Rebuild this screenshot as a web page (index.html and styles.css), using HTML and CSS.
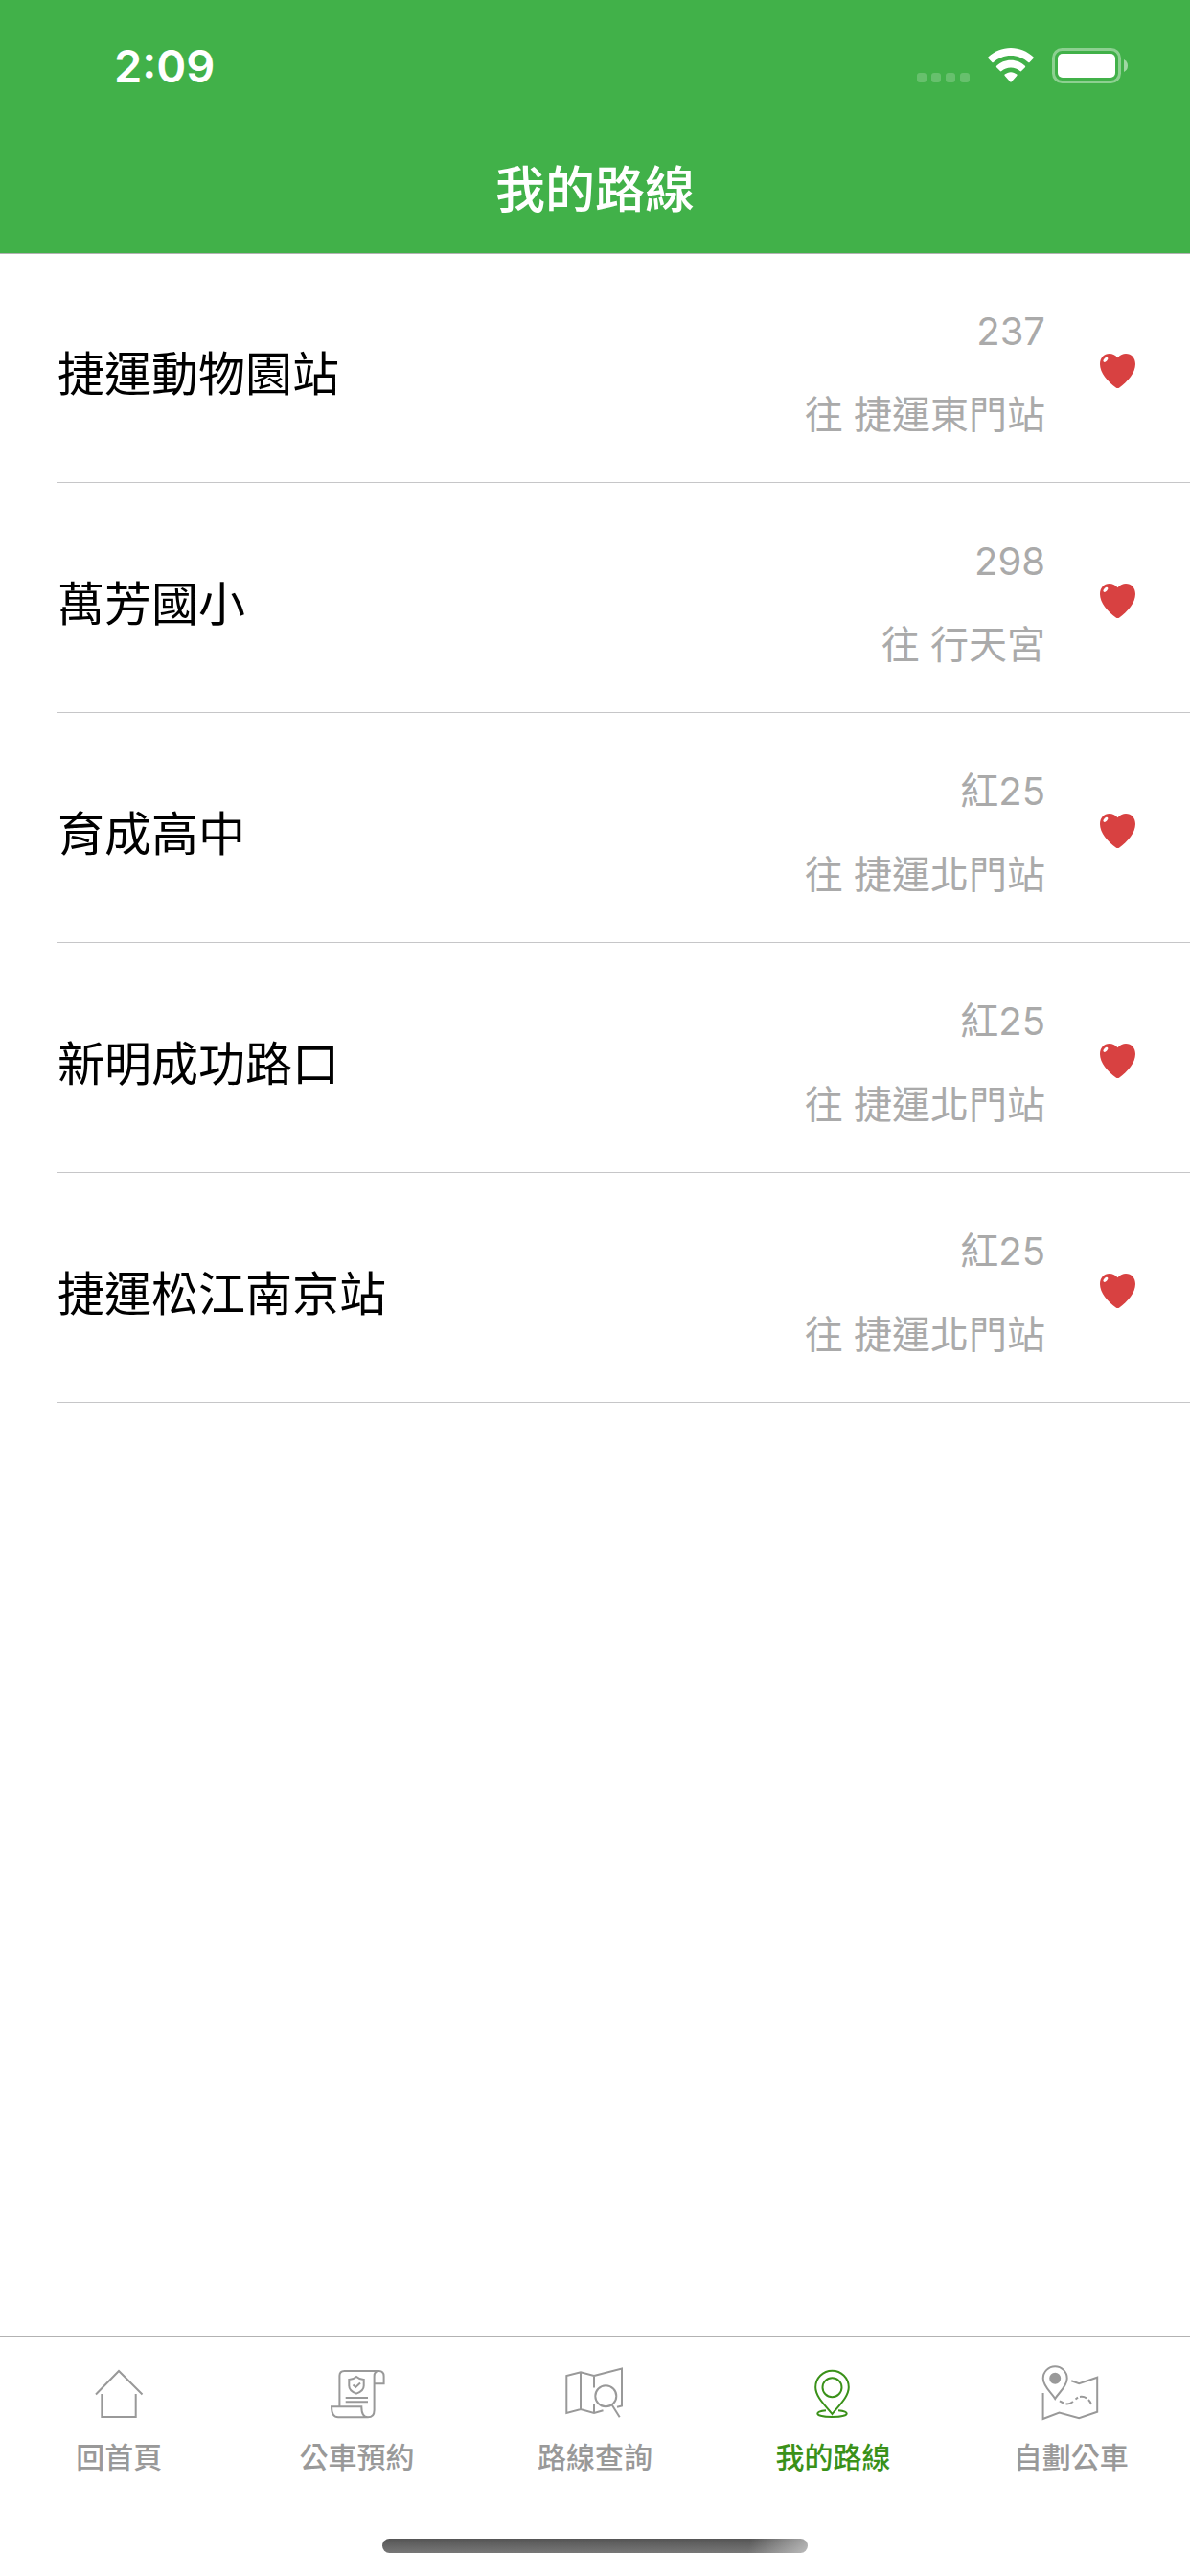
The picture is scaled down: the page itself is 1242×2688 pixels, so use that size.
FILE: index.html
```html
<!DOCTYPE html>
<html lang="zh-Hant">
  <head>
    <meta charset="UTF-8" />
    <meta name="viewport" content="width=device-width, initial-scale=1.0" />
    <title>我的路線</title>
    <link rel="stylesheet" href="styles.css">
  </head>
  <body>
    <header class="header">
      <div class="status">
        <span class="time">2:09</span>
        <div class="status-icons">
          <svg class="signal" width="55" height="36" viewBox="0 0 55 36">
            <g fill="#fff" fill-opacity="0.2">
              <rect x="0" y="26" width="10" height="10" rx="3" />
              <rect x="15" y="26" width="10" height="10" rx="3" />
              <rect x="30" y="26" width="10" height="10" rx="3" />
              <rect x="45" y="26" width="10" height="10" rx="3" />
            </g>
          </svg>
          <svg width="48" height="36" viewBox="0 0 48 36" fill="#fff">
            <path d="M24 0C33 0 41.200 3.500 47.400 9.300Q48.200 10.200 47.400 11L43.600 15Q43 15.600 42.200 15C37.400 10.700 31 8 24 8S10.600 10.700 5.800 15Q5 15.600 4.400 15L.6 11Q-.2 10.200.6 9.300C6.800 3.500 15 0 24 0Z" />
            <path d="M24 12.700C29.700 12.700 35 15 38.900 18.700Q39.600 19.400 38.900 20.200L35.100 24.100Q34.400 24.800 33.600 24.100C31 21.800 27.700 20.500 24 20.500S17 21.800 14.400 24.100Q13.600 24.800 12.900 24.100L9.100 20.200Q8.400 19.400 9.100 18.700C13 15 18.300 12.700 24 12.700Z" />
            <path d="M24 25.200C26.300 25.200 28.500 26.100 30.300 27.600Q31 28.300 30.300 29L24.800 35.300Q24 36.200 23.200 35.300L17.700 29Q17 28.300 17.700 27.600C19.500 26.100 21.700 25.200 24 25.200Z" />
          </svg>
          <svg width="79" height="37" viewBox="0 0 79 37">
            <rect x="1.500" y="1.500" width="69" height="34" rx="9" fill="none" stroke="#fff" stroke-opacity="0.400" stroke-width="3" />
            <rect x="6" y="6" width="60" height="25" rx="5" fill="#fff" />
            <path d="M75 12Q79 14 79 18.500T75 25Z" fill="#fff" fill-opacity="0.500" />
          </svg>
        </div>
      </div>
      <h1 class="title">我的路線</h1>
    </header>

    <svg class="sprite" width="0" height="0">
      <symbol id="heart" viewBox="0 0 37 36">
        <path fill="#d84141" d="M18.500 4.300C21 1 24.300 0 27 0C33 0 37 4.600 37 11C37 20 29 29 20.300 35.400Q18.500 36.600 16.700 35.400C8 29 0 20 0 11C0 4.600 4 0 10 0C12.700 0 16 1 18.500 4.300Z" />
        <ellipse cx="5.900" cy="6.300" rx="3" ry="1.700" transform="rotate(-48 5.900 6.300)" fill="#fff" />
      </symbol>
    </svg>

    <main class="main">
      <ul class="list">
        <li class="row">
          <span class="station">捷運動物園站</span>
          <div class="route">
            <span>237</span>
            <span>往 捷運東門站</span>
          </div>
          <button class="fav" type="button" aria-label="取消收藏"><svg><use href="#heart" /></svg></button>
        </li>
        <li class="row">
          <span class="station">萬芳國小</span>
          <div class="route">
            <span>298</span>
            <span>往 行天宮</span>
          </div>
          <button class="fav" type="button" aria-label="取消收藏"><svg><use href="#heart" /></svg></button>
        </li>
        <li class="row">
          <span class="station">育成高中</span>
          <div class="route">
            <span>紅25</span>
            <span>往 捷運北門站</span>
          </div>
          <button class="fav" type="button" aria-label="取消收藏"><svg><use href="#heart" /></svg></button>
        </li>
        <li class="row">
          <span class="station">新明成功路口</span>
          <div class="route">
            <span>紅25</span>
            <span>往 捷運北門站</span>
          </div>
          <button class="fav" type="button" aria-label="取消收藏"><svg><use href="#heart" /></svg></button>
        </li>
        <li class="row">
          <span class="station">捷運松江南京站</span>
          <div class="route">
            <span>紅25</span>
            <span>往 捷運北門站</span>
          </div>
          <button class="fav" type="button" aria-label="取消收藏"><svg><use href="#heart" /></svg></button>
        </li>
      </ul>
    </main>

    <footer class="footer">
      <nav class="tabs">
        <a class="tab" href="#home">
          <svg viewBox="0 0 64 60">
            <path d="M8 32.500L32 8L56.500 32.500M14.300 32V56H49.700V32" />
          </svg>
          <span>回首頁</span>
        </a>
        <a class="tab" href="#booking">
          <svg viewBox="0 0 64 60">
            <path d="M13.400 45V13Q13.400 8 18.500 8H54.500Q59.600 8 59.600 13.500V21.300H49.600" />
            <path d="M54.500 8Q49.600 8 49.600 13.500V49Q49.600 56.300 43 56.300H12Q5 56.300 5 45.300H36.300Q36.300 56.300 43 56.300" />
            <path d="M31 14C28.500 16.200 26 17 23.300 17V23.500C23.300 27.500 26.500 30 31 31.600C35.500 30 38.700 27.500 38.700 23.500V17C36 17 33.500 16.200 31 14ZM27.500 22.500L30.300 25L35 20.500M19.700 36H43M19.700 40.300H43" />
          </svg>
          <span>公車預約</span>
        </a>
        <a class="tab" href="#search">
          <svg viewBox="0 0 64 60">
            <path d="M31 25.500V13L17 9.300L2.300 13V52L17 48L31 52L40.500 49.300M17 9.300V48M31 13L60 5.500V44.500L55 45.700M31 43V52" />
            <circle cx="43.300" cy="34.300" r="11" />
            <path d="M49.700 43.500L57.700 56.300" />
          </svg>
          <span>路線查詢</span>
        </a>
        <a class="tab active" href="#mine">
          <svg viewBox="0 0 64 60">
            <path d="M31.500 53C24.500 44 14.200 35 14.200 25A17.300 17.300 0 0 1 48.800 25C48.800 35 38.500 44 31.500 53Z" />
            <circle cx="31.500" cy="25.200" r="10" />
            <path d="M25 49.300C19.500 49.800 16.300 51 16.300 52.600C16.300 54.700 22.500 56 31.500 56S46.700 54.700 46.700 52.600C46.700 51 43.500 49.800 38 49.300" />
          </svg>
          <span>我的路線</span>
        </a>
        <a class="tab" href="#custom">
          <svg viewBox="0 0 64 60">
            <path d="M15.200 37C11 30 2.700 24 2.700 15.700A12.500 12.500 0 0 1 27.700 15.700C27.700 24 19.500 30 15.200 37Z" />
            <circle class="dot" cx="15.200" cy="15.700" r="5" />
            <path d="M2.600 31V58L19.500 51.500L40.200 57.300L59.200 50.700V14.700L40.200 21.300L32.200 18.300" />
            <path d="M19.900 39.300L24 41.500M26.500 42.300Q30 43 34 40M36.500 37.500L39 35.600M41 34.900Q45 34.300 48 36.300M50 38Q52 40 53 43" />
          </svg>
          <span>自劃公車</span>
        </a>
      </nav>
      <div class="home-indicator"></div>
    </footer>
  </body>
</html>
```

FILE: styles.css
```css
body {
  display: flex;
  flex-direction: column;
  min-height: 100vh;
  margin: 0;
  background-color: #fff;
  color: #000;
  font-family: Inter, "Noto Sans CJK TC", sans-serif;
}
.header {
  background-color: #41b149;
  color: #fff;
  box-shadow: 0 1px 0 #b2b2b2;
}
.status {
  display: flex;
  justify-content: space-between;
  align-items: center;
  height: 132px;
  padding: 2px 65px 0 119px;
}
.time {
  font-size: 47px;
  font-weight: 600;
}
.status-icons {
  display: flex;
  gap: 19px;
}
.title {
  margin: 0;
  font-size: 52px;
  font-weight: 500;
  line-height: 130px;
  text-align: center;
}
.sprite {
  position: absolute;
}
.main {
  flex: 1;
}
.list {
  margin: 0;
  padding: 0 0 0 60px;
  list-style: none;
}
.row {
  display: flex;
  align-items: center;
  box-sizing: border-box;
  height: 240px;
  padding-top: 6px;
  padding-right: 39px;
  border-bottom: 1px solid #c6c6c8;
}
.station {
  flex: 1;
  font-size: 49px;
}
.route {
  display: flex;
  flex-direction: column;
  gap: 29px;
  padding-top: 6px;
  color: #aaa;
  font-size: 40px;
  line-height: 58px;
  text-align: right;
}
.fav {
  display: flex;
  margin-left: 39px;
  padding: 18px;
  border: none;
  background: none;
  cursor: pointer;
}
.fav svg {
  width: 37px;
  height: 36px;
}
.footer {
  border-top: 1px solid #b2b2b2;
}
.tabs {
  display: flex;
  height: 210px;
}
.tab {
  display: flex;
  flex: 1;
  flex-direction: column;
  align-items: center;
  gap: 16px;
  padding-top: 27px;
  color: #999;
  font-size: 30px;
  font-weight: 500;
  line-height: 44px;
  text-decoration: none;
}
.tab svg {
  width: 64px;
  height: 60px;
  fill: none;
  stroke: currentColor;
  stroke-width: 2;
}
.tab .dot {
  fill: currentColor;
}
.tab.active {
  color: #3a9119;
}
.home-indicator {
  width: 444px;
  height: 15px;
  margin: 0 auto 24px;
  border-radius: 8px;
  background: linear-gradient(100deg, transparent 86%, rgba(255, 255, 255, 0.5)), linear-gradient(#555, #777);
}
```
